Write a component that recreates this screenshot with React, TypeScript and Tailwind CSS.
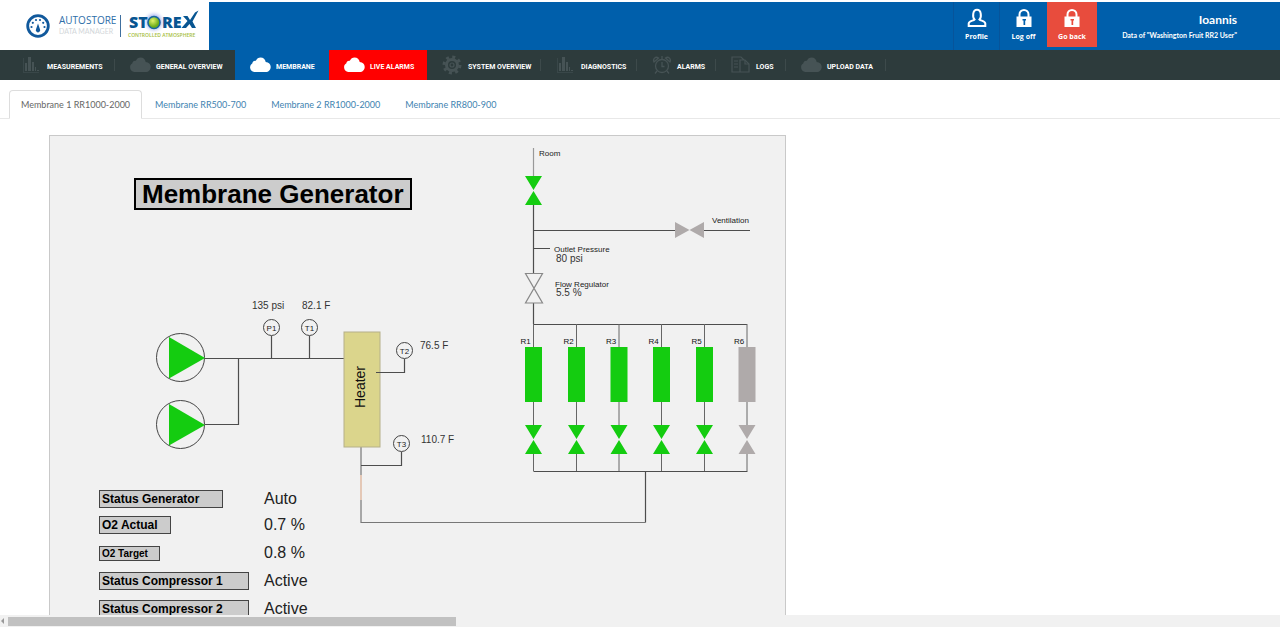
import React from "react";
import clsx from "clsx";

type IconProps = { className?: string };

const ChartIcon = ({ className }: IconProps) => (
  <svg viewBox="0 0 22 20" className={className} fill="currentColor" aria-hidden="true">
    <rect x="4" y="8" width="2" height="8" />
    <rect x="7" y="2" width="3" height="14" />
    <rect x="11" y="7" width="2" height="9" />
    <rect x="14" y="12" width="1" height="4" />
    <rect x="16" y="15" width="2" height="1" />
    <path d="M2 3h1v14h15v1H2z" opacity="0.500" />
  </svg>
);

const CloudIcon = ({ className }: IconProps) => (
  <svg viewBox="0 0 22 20" className={className} fill="currentColor" aria-hidden="true">
    <path d="M5.200 17A4.700 4.700 0 0 1 3.400 8.300C3.500 6.600 5 5.300 6.800 5.800 7.700 3.600 9.500 2.400 11.500 2.400c2.800 0 4.900 2 5.200 4.700C19.700 7.200 21.700 9.300 21.700 12c0 2.900-2.100 5-4.900 5z" />
  </svg>
);

const GearIcon = ({ className }: IconProps) => (
  <svg viewBox="0 0 22 20" className={className} fill="none" stroke="currentColor" aria-hidden="true">
    <circle cx="11" cy="10" r="8" strokeWidth="3" strokeDasharray="3 3.283" />
    <circle cx="11" cy="10" r="5.500" strokeWidth="3" />
    <circle cx="11" cy="10" r="2" strokeWidth="1.200" />
  </svg>
);

const ClockIcon = ({ className }: IconProps) => (
  <svg viewBox="0 0 22 20" className={className} fill="none" stroke="currentColor" strokeWidth="1.300" aria-hidden="true">
    <circle cx="11" cy="11" r="6.500" />
    <path d="M11 7v4.500h2.500M11 1v3M6 16l-2 2.500M16 16l2 2.500" />
    <path d="M3 7C1.500 4 4.500 1 7.500 3zM19 7c1.500-3-1.500-6-4.500-4z" />
  </svg>
);

const LogsIcon = ({ className }: IconProps) => (
  <svg viewBox="0 0 22 20" className={className} fill="none" stroke="currentColor" strokeWidth="1.200" aria-hidden="true">
    <path d="M10 17H2V2h9l3 3M10 17h9V9l-4-4h-5z" />
    <path d="M15 5v4h4M4 6h4M4 9h4M4 12h4" />
  </svg>
);

const UserIcon = ({ className }: IconProps) => (
  <svg viewBox="0 0 20 20" className={className} fill="none" stroke="currentColor" strokeWidth="2" aria-hidden="true">
    <path d="M7.500 11.500C5.500 9.500 5.300 1.700 10 1.700s4.500 7.800 2.500 9.800c1.200 1.300 5.800 1.300 5.800 4v2.500H1.700v-2.500c0-2.700 4.600-2.700 5.800-4z" />
  </svg>
);

const LockIcon = ({ className }: IconProps) => (
  <svg viewBox="0 0 20 20" className={className} aria-hidden="true">
    <path d="M5.500 9V6.500a4.500 4.500 0 0 1 9 0V9" fill="none" stroke="currentColor" strokeWidth="2" />
    <path
      fillRule="evenodd"
      fill="currentColor"
      d="M2.500 8.500h15V19h-15zM8.500 11v1.500h1V17h1.700v-4.500h.8V11z"
    />
  </svg>
);

const navItems = [
  { label: "MEASUREMENTS", icon: ChartIcon, style: "w-[108px] gap-1", divider: true },
  { label: "GENERAL OVERVIEW", icon: CloudIcon, style: "w-[120px] gap-[5px]" },
  { label: "MEMBRANE", icon: CloudIcon, style: "w-[94px] gap-[5px] bg-[#005fab]", active: true },
  { label: "LIVE ALARMS", icon: CloudIcon, style: "w-[98px] gap-[5px] bg-[#ff0000]", active: true },
  { label: "SYSTEM OVERVIEW", icon: GearIcon, style: "w-[114px] gap-[5px]", divider: true },
  { label: "DIAGNOSTICS", icon: ChartIcon, style: "w-[96px] gap-1", divider: true },
  { label: "ALARMS", icon: ClockIcon, style: "w-[79px] gap-1", divider: true },
  { label: "LOGS", icon: LogsIcon, style: "w-[70px] gap-1", divider: true },
  { label: "UPLOAD DATA", icon: CloudIcon, style: "w-[100px] gap-[5px]", divider: true },
];

const tabs = [
  "Membrane 1 RR1000-2000",
  "Membrane RR500-700",
  "Membrane 2 RR1000-2000",
  "Membrane RR800-900",
];

const statusRows = [
  { label: "Status Generator", value: "Auto", row: "", box: "h-[18px] w-[124px] text-xs" },
  { label: "O2 Actual", value: "0.7 %", row: "mt-2", box: "h-[18px] w-[72px] text-xs" },
  { label: "O2 Target", value: "0.8 %", row: "mt-[10px]", box: "h-[15px] w-[61px] text-[10px]" },
  { label: "Status Compressor 1", value: "Active", row: "mt-[10px]", box: "h-[18px] w-[150px] text-xs" },
  { label: "Status Compressor 2", value: "Active", row: "mt-[10px]", box: "h-[18px] w-[150px] text-xs" },
];

const reactors = [
  { label: "R1", x: 533.5, on: true },
  { label: "R2", x: 576.5, on: true },
  { label: "R3", x: 619, on: true },
  { label: "R4", x: 661.5, on: true },
  { label: "R5", x: 704.5, on: true },
  { label: "R6", x: 747, on: false },
];

const sensors = [
  { label: "P1", x: 271.5, y: 327.5 },
  { label: "T1", x: 309.5, y: 327.5 },
  { label: "T2", x: 404.5, y: 350.5 },
  { label: "T3", x: 401.5, y: 443.5 },
];

const GREEN = "#14cc10";
const GREY = "#afaaaa";

const Logo = () => (
  <a href="#" className="flex h-full w-[209px] items-center bg-white pl-[26px]" aria-label="Autostore Storex">
    <svg viewBox="0 0 24 24" className="size-6" fill="none" aria-hidden="true">
      <circle cx="12" cy="12" r="10.300" stroke="#11599c" strokeWidth="2.800" />
      <g fill="#11599c">
        <circle cx="5.500" cy="13" r="1.100" />
        <circle cx="6.800" cy="8.800" r="1.100" />
        <circle cx="10" cy="6" r="1.100" />
        <circle cx="14" cy="6" r="1.100" />
        <circle cx="17.200" cy="8.800" r="1.100" />
        <circle cx="18.500" cy="13" r="1.100" />
        <path d="M12 9.500l1.900 5.500a2.200 2.200 0 1 1-3.800 0z" />
      </g>
    </svg>
    <span className="ml-2 flex h-[22px] w-[63px] flex-col justify-center border-r border-[#3f6f9f] pl-px leading-[11px] whitespace-nowrap">
      <span className="font-['Open_Sans',sans-serif] text-[10px] text-[#2e6ea8]">AUTOSTORE</span>
      <span className="text-[7px] text-[#d3d7da]">DATA MANAGER</span>
    </span>
    <svg viewBox="0 0 76 34" className="ml-1 h-[34px] w-[76px]" aria-hidden="true">
      <defs>
        <radialGradient id="glow">
          <stop offset="0.400" stopColor="#8a9bea" />
          <stop offset="1" stopColor="#fff" stopOpacity="0" />
        </radialGradient>
        <radialGradient id="ball" cx="0.400" cy="0.350">
          <stop offset="0" stopColor="#e3f36c" />
          <stop offset="1" stopColor="#6fae1c" />
        </radialGradient>
      </defs>
      <circle cx="29" cy="13" r="12" fill="url(#glow)" />
      <g fill="#075591" fontFamily="Open Sans, sans-serif" fontWeight="800" fontSize="16">
        <text x="4" y="19">ST</text>
        <text x="37" y="19">RE</text>
      </g>
      <circle cx="29" cy="13.500" r="6" fill="url(#ball)" stroke="#17679e" strokeWidth="1.600" />
      <path d="M58 7h4.500l2.500 4 5-7.500L73.500 1.500 67.500 12.500 71 19h-4l-2.500-4-3.500 4h-4.500l6-7z" fill="#075591" />
      <text x="3" y="28" fill="#a5bd3b" fontFamily="Open Sans, sans-serif" fontSize="5" fontWeight="600">
        CONTROLLED ATMOSPHERE
      </text>
    </svg>
  </a>
);

const Valve = ({ x, y, fill }: { x: number; y: number; fill: string }) => (
  <path d={`M${x - 8.5} ${y - 14.5}h17l-8.500 14zM${x - 8.5} ${y + 14.5}h17l-8.500-14z`} fill={fill} />
);

const Diagram = () => (
  <svg
    viewBox="50 136 735 520"
    className="col-start-1 row-start-1 w-full font-['Liberation_Sans',sans-serif]"
    role="img"
    aria-label="Membrane generator process"
  >
    <g fill="none" stroke="#4d4d4d" strokeWidth="1.200">
      <path d="M533.500 148v28" stroke="#999" />
      <path d="M533.500 205v69M533.500 230.500H750M533.500 248.500H550M533.500 303v21" />
      <path d="M533.500 324.500H747M533.500 471.500H747.500M645.500 471v51.500" />
      <path d="M645.500 522.500H361V447" stroke="#777" />
      <path d="M205 358.500h139M271.500 336v22M309.500 336v22M238.500 358v66.500H205" />
      <path d="M404.500 359v13.500H376M401.500 452v13.500H361" />
      <path d="M361 475v25" stroke="#f1f1f1" strokeWidth="2" />
      <path d="M361 475v25" stroke="#dcae90" />
      <path d="M525.500 273.500h17l-17 29.500h17z" stroke="#888" />
    </g>

    {/* compressors */}
    {[357.5, 424.5].map((y) => (
      <g key={y}>
        <circle cx="180.500" cy={y} r="24" fill="none" stroke="#444" />
        <path d={`M169 ${y - 20.5}l36 21-36 20.500z`} fill={GREEN} />
      </g>
    ))}

    <rect x="344" y="332" width="36" height="115" fill="#dbd58c" stroke="#b5b08a" />
    <path d="M376 372.500h5" stroke="#4d4d4d" />
    <text x="365" y="387" fontSize="14" fill="#111" textAnchor="middle" transform="rotate(-90 365 387)">
      Heater
    </text>

    {sensors.map(({ label, x, y }) => (
      <g key={label}>
        <circle cx={x} cy={y} r="8" fill="#f1f1f1" stroke="#444" />
        <text x={x} y={y + 3} fontSize="8" fill="#222" textAnchor="middle">
          {label}
        </text>
      </g>
    ))}

    <Valve x={533.5} y={190.5} fill={GREEN} />
    <rect x="675" y="229" width="29" height="3" fill="#f1f1f1" />
    <path d="M675 222v16l14.500-8zM704 222v16l-14.500-8z" fill={GREY} />

    {reactors.map(({ label, x, on }) => (
      <g key={label}>
        <path d={`M${x} 324v147`} stroke="#666" />
        <rect x={x - 8.5} y="347" width="17" height="55" fill={on ? GREEN : GREY} />
        <rect x={x - 1} y="425" width="2" height="29" fill="#f1f1f1" />
        <Valve x={x} y={439.5} fill={on ? GREEN : GREY} />
        <text x={x - 13} y="344" fontSize="8" fill="#111">
          {label}
        </text>
      </g>
    ))}

    <g fontSize="8" fill="#222">
      <text x="539" y="156">Room</text>
      <text x="712" y="223">Ventilation</text>
      <text x="554" y="252">Outlet Pressure</text>
      <text x="555" y="287">Flow Regulator</text>
    </g>
    <g fontSize="10" fill="#333">
      <text x="556" y="262">80 psi</text>
      <text x="556" y="296">5.5 %</text>
      <text x="252" y="309">135 psi</text>
      <text x="302" y="309">82.1 F</text>
      <text x="420" y="349">76.5 F</text>
      <text x="421" y="443">110.7 F</text>
    </g>
  </svg>
);

const App = () => {
  return (
    <div className="flex h-screen flex-col overflow-hidden bg-white font-['Lato',sans-serif]">
      <header className="mt-[2px] flex h-12 shrink-0 justify-between bg-[#005fab] text-white">
        <Logo />
        <div className="flex h-full text-[7px] font-bold">
          <a href="#" className="flex w-[47px] flex-col items-center gap-1 border-x border-[#07549a] pt-[6px] font-['Open_Sans',sans-serif]">
            <UserIcon className="size-5" />
            <span className="leading-[10px]">Profile</span>
          </a>
          <a href="#" className="flex w-[47px] flex-col items-center gap-1 pt-[6px] font-['Open_Sans',sans-serif]">
            <LockIcon className="size-5" />
            <span className="leading-[10px]">Log off</span>
          </a>
          <a href="#" className="flex h-[45px] w-[50px] flex-col items-center gap-1 bg-[#e84c3d] pt-[6px] font-['Open_Sans',sans-serif]">
            <LockIcon className="size-5" />
            <span className="leading-[10px]">Go back</span>
          </a>
          <div className="flex w-[183px] flex-col items-end pt-[9px] pr-[43px]">
            <p className="text-xs leading-[18px]">Ioannis</p>
            <p className="leading-[12px] whitespace-nowrap">Data of "Washington Fruit RR2 User"</p>
          </div>
        </div>
      </header>

      <nav className="flex h-[30px] shrink-0 bg-[#2d3b3c] pl-[7px] font-['Roboto',sans-serif]">
        {navItems.map(({ label, icon: Icon, style, active, divider }) => (
          <a key={label} href="#" className={clsx("flex items-center pl-[14px] text-white", style)}>
            <Icon className={clsx("h-5 w-[22px] shrink-0", active ? "text-white" : "text-[#465355]")} />
            <span className="grow pt-1 text-[7px] leading-[10px] font-bold whitespace-nowrap">{label}</span>
            {divider && <span className="h-3 w-px bg-[#3d4a4b]" />}
          </a>
        ))}
      </nav>

      <ul className="mt-[10px] flex h-[29px] shrink-0 border-b border-[#e8e8e8] pl-[9px] text-[9px] leading-[28px]">
        {tabs.map((tab, i) => (
          <li key={tab}>
            <a
              href="#"
              className={clsx(
                "block h-[29px] rounded-t-sm border px-[11px] whitespace-nowrap",
                i === 0
                  ? "border-[#ddd] border-b-white bg-white text-[#666]"
                  : "ml-px border-transparent text-[#4183b0]"
              )}
            >
              {tab}
            </a>
          </li>
        ))}
      </ul>

      <main className="min-h-0 flex-1 overflow-hidden pt-4 pl-[49px]">
        <div className="grid w-[737px] border border-[#c9c9c9] bg-[#f1f1f1] font-['Liberation_Sans',sans-serif]">
          <Diagram />
          <h1 className="col-start-1 row-start-1 mt-[42px] ml-[84px] h-8 self-start justify-self-start border-2 border-black bg-[#ccc] px-[6px] text-[26px] leading-[28px] font-bold text-black">
            Membrane Generator
          </h1>
          <dl className="col-start-1 row-start-1 mt-[354px] ml-[49px] self-start justify-self-start">
            {statusRows.map(({ label, value, row, box }) => (
              <div key={label} className={clsx("flex items-center", row)}>
                <dt className="w-[165px]">
                  <span className={clsx("flex items-center border border-[#444] bg-[#ccc] px-[2px] font-bold text-black", box)}>
                    {label}
                  </span>
                </dt>
                <dd className="h-[18px] text-base leading-[18px] text-[#222]">{value}</dd>
              </div>
            ))}
          </dl>
        </div>
      </main>

      <div className="flex h-3 shrink-0 items-center bg-[#f1f1f1]">
        <svg viewBox="0 0 8 12" className="h-3 w-2" fill="#999" aria-hidden="true">
          <path d="M4 3v6L1 6z" />
        </svg>
        <div className="h-[9px] w-[35%] bg-[#c1c1c1]" />
      </div>
    </div>
  );
};

export default App;
